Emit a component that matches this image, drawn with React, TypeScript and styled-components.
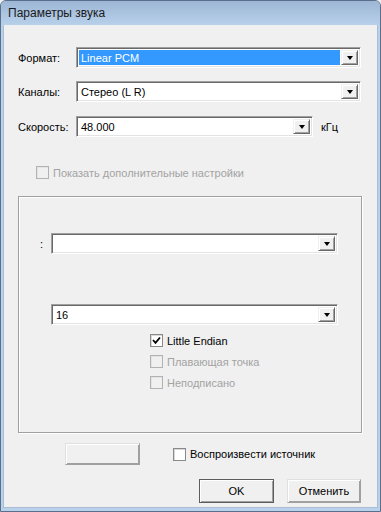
import styled, { createGlobalStyle } from "styled-components";

const GlobalStyle = createGlobalStyle`
  html, body {
    margin: 0;
    padding: 0;
    background: #f0f0f0;
  }
  * {
    box-sizing: border-box;
  }
`;

const Window = styled.div`
  width: 381px;
  height: 512px;
  display: flex;
  flex-direction: column;
  border: 1px solid #5a6f8c;
  border-radius: 6px 6px 0 0;
  background: #b9d1ea;
  overflow: hidden;
  font-family: "Liberation Sans", Arial, sans-serif;
  font-size: 11px;
  color: #000;
`;

const TitleBar = styled.div`
  height: 24px;
  flex: none;
  display: flex;
  align-items: center;
  padding-left: 7px;
  background: linear-gradient(#9cb6d4, #b8d0ea);
  font-size: 12px;
  color: #1a1a1a;
`;

const Client = styled.div`
  flex: 1;
  margin: 0 2px 3px 2px;
  background: #f0f0f0;
  border: 1px solid #a9bdd4;
  border-top: none;
  display: flex;
  flex-direction: column;
  padding: 22px 16px 0 14px;
`;

const Row = styled.div<{ $mt?: number }>`
  display: flex;
  align-items: center;
  height: 21px;
  margin-top: ${(p) => p.$mt ?? 0}px;
`;

const Label = styled.div`
  width: 58px;
  flex: none;
`;

const Combo = styled.div<{ $w: number }>`
  width: ${(p) => p.$w}px;
  height: 21px;
  flex: none;
  display: flex;
  background: #fff;
  border-top: 1px solid #a0a0a0;
  border-left: 1px solid #a0a0a0;
  border-bottom: 1px solid #fff;
  border-right: 1px solid #fff;
  box-shadow: inset 1px 1px 0 #696969, inset -1px -1px 0 #e3e3e3;
  padding: 2px;
`;

const ComboText = styled.div<{ $selected?: boolean }>`
  flex: 1;
  display: flex;
  align-items: center;
  padding-left: 2px;
  margin-right: 1px;
  background: ${(p) => (p.$selected ? "#3399ff" : "transparent")};
  color: ${(p) => (p.$selected ? "#fff" : "#000")};
`;

const DropButton = styled.div`
  width: 17px;
  flex: none;
  display: flex;
  align-items: center;
  justify-content: center;
  background: #f0f0f0;
  border-top: 1px solid #f0f0f0;
  border-left: 1px solid #f0f0f0;
  border-bottom: 1px solid #696969;
  border-right: 1px solid #696969;
  box-shadow: inset 1px 1px 0 #fff, inset -1px -1px 0 #a0a0a0;
`;

const Arrow = styled.div`
  width: 0;
  height: 0;
  border-left: 3.5px solid transparent;
  border-right: 3.5px solid transparent;
  border-top: 4px solid #000;
  margin-top: 1px;
`;

const Unit = styled.div`
  margin-left: 8px;
`;

const CheckRow = styled.label<{ $disabled?: boolean; $ml: number; $mt: number }>`
  display: flex;
  align-items: center;
  gap: 4px;
  height: 13px;
  margin-left: ${(p) => p.$ml}px;
  margin-top: ${(p) => p.$mt}px;
  color: ${(p) => (p.$disabled ? "#a3a3a3" : "#000")};
`;

const Box = styled.div<{ $disabled?: boolean }>`
  width: 13px;
  height: 13px;
  flex: none;
  display: flex;
  align-items: center;
  justify-content: center;
  border: 1px solid ${(p) => (p.$disabled ? "#b2b2b2" : "#8a8a8a")};
  background: ${(p) => (p.$disabled ? "#f0f0f0" : "#fff")};
  box-shadow: inset 1px 1px 0 ${(p) => (p.$disabled ? "#e4e4e4" : "#d8d8d8")};
`;

const Group = styled.div`
  margin-top: 17px;
  width: 344px;
  height: 237px;
  border: 1px solid #a0a0a0;
  box-shadow: inset 1px 1px 0 #fff, 1px 1px 0 #fff;
  display: flex;
  flex-direction: column;
  padding: 36px 0 0 21px;
`;

const Colon = styled.div`
  width: 11px;
  flex: none;
`;

const Bottom = styled.div`
  display: flex;
  align-items: center;
  margin-top: 10px;
  height: 22px;
`;

const Buttons = styled.div`
  display: flex;
  justify-content: flex-end;
  gap: 13px;
  margin-top: 14px;
`;

const Button = styled.div<{ $w: number; $h: number; $default?: boolean; $ml?: number }>`
  width: ${(p) => p.$w}px;
  height: ${(p) => p.$h}px;
  margin-left: ${(p) => p.$ml ?? 0}px;
  display: flex;
  align-items: center;
  justify-content: center;
  background: #f0f0f0;
  border: 1px solid ${(p) => (p.$default ? "#5c5c5c" : "#a0a0a0")};
  border-top-color: ${(p) => (p.$default ? "#5c5c5c" : "#e0e0e0")};
  border-left-color: ${(p) => (p.$default ? "#5c5c5c" : "#e0e0e0")};
  box-shadow: inset 1px 1px 0 #fff, inset -1px -1px 0 #a0a0a0;
`;

const Check = () => (
  <svg width="9" height="9" viewBox="0 0 9 9">
    <path d="M1 4 L3.5 6.8 L8 1.5" fill="none" stroke="#000" strokeWidth="1.8" />
  </svg>
);

const ComboBox = ({ w, text, selected }: { w: number; text?: string; selected?: boolean }) => (
  <Combo $w={w}>
    <ComboText $selected={selected}>{text}</ComboText>
    <DropButton>
      <Arrow />
    </DropButton>
  </Combo>
);

const CheckBox = ({
  label,
  checked,
  disabled,
  ml,
  mt,
}: {
  label: string;
  checked?: boolean;
  disabled?: boolean;
  ml: number;
  mt: number;
}) => (
  <CheckRow $disabled={disabled} $ml={ml} $mt={mt}>
    <Box $disabled={disabled}>{checked && <Check />}</Box>
    {label}
  </CheckRow>
);

export default function App() {
  return (
    <>
      <GlobalStyle />
      <Window>
        <TitleBar>Параметры звука</TitleBar>
        <Client>
          <Row>
            <Label>Формат:</Label>
            <ComboBox w={285} text="Linear PCM" selected />
          </Row>
          <Row $mt={13}>
            <Label>Каналы:</Label>
            <ComboBox w={285} text="Стерео (L R)" />
          </Row>
          <Row $mt={14}>
            <Label>Скорость:</Label>
            <ComboBox w={237} text="48.000" />
            <Unit>кГц</Unit>
          </Row>
          <CheckBox label="Показать дополнительные настройки" disabled ml={18} mt={29} />
          <Group>
            <Row>
              <Colon>:</Colon>
              <ComboBox w={287} />
            </Row>
            <Row $mt={50}>
              <Colon />
              <ComboBox w={287} text="16" />
            </Row>
            <CheckBox label="Little Endian" checked ml={110} mt={9} />
            <CheckBox label="Плавающая точка" disabled ml={110} mt={8} />
            <CheckBox label="Неподписано" disabled ml={110} mt={8} />
          </Group>
          <Bottom>
            <Button $w={75} $h={22} $ml={47} />
            <CheckBox label="Воспроизвести источник" ml={33} mt={0} />
          </Bottom>
          <Buttons>
            <Button $w={75} $h={24} $default>
              OK
            </Button>
            <Button $w={74} $h={24}>
              Отменить
            </Button>
          </Buttons>
        </Client>
      </Window>
    </>
  );
}
